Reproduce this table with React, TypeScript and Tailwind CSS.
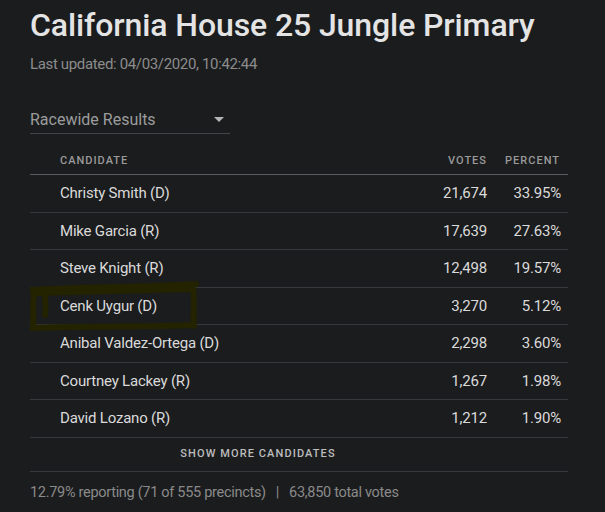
const rows = [
  { name: "Christy Smith (D)", votes: "21,674", pct: "33.95%" },
  { name: "Mike Garcia (R)", votes: "17,639", pct: "27.63%" },
  { name: "Steve Knight (R)", votes: "12,498", pct: "19.57%" },
  { name: "Cenk Uygur (D)", votes: "3,270", pct: "5.12%", marked: true },
  { name: "Anibal Valdez-Ortega (D)", votes: "2,298", pct: "3.60%" },
  { name: "Courtney Lackey (R)", votes: "1,267", pct: "1.98%" },
  { name: "David Lozano (R)", votes: "1,212", pct: "1.90%" },
];

export default function App() {
  return (
    <main
      className="w-[605px] h-[512px] overflow-hidden bg-[#1b1c1e] px-[30px] pt-[6px]"
      style={{ fontFamily: "Roboto, 'Liberation Sans', sans-serif" }}
    >
      <h1 className="text-[32px] leading-[38px] font-medium text-[#e4e4e4] tracking-[-0.1px]">
        California House 25 Jungle Primary
      </h1>
      <p className="mt-[11px] text-[15px] leading-[18px] text-[#8c8c8c] tracking-[-0.35px]">
        Last updated: 04/03/2020, 10:42:44
      </p>

      {/* dropdown */}
      <div className="mt-[31px] w-[200px] h-[30px] flex items-center justify-between border-b border-[#444548] pt-[2px]">
        <span className="text-[16px] text-[#9c9c9c]">Racewide Results</span>
        <span className="mr-[6px] w-0 h-0 border-l-[5px] border-r-[5px] border-t-[5px] border-l-transparent border-r-transparent border-t-[#b4b4b4]" />
      </div>

      {/* table */}
      <div className="mt-[16px] w-[538px]">
        <div className="h-[25px] pt-[5px] flex items-start border-b border-[#5a5b5e] text-[11px] leading-[12px] font-medium tracking-[1px] text-[#9a9a9a]">
          <span className="flex-1 pl-[30px]">CANDIDATE</span>
          <span className="w-[60px] text-right">VOTES</span>
          <span className="w-[81px] text-right pr-[8px]">PERCENT</span>
        </div>
        {rows.map((r) => (
          <div
            key={r.name}
            className="relative h-[37.5px] flex items-center border-b border-[#37383b] text-[15px] tracking-[-0.2px] text-[#dadada]"
          >
            <span className="flex-1 pl-[30px]">{r.name}</span>
            <span className="w-[60px] text-right">{r.votes}</span>
            <span className="w-[81px] text-right pr-[7px]">{r.pct}</span>
            {r.marked && (
              <svg
                className="absolute left-0 top-[-7px] pointer-events-none"
                width="172"
                height="50"
                viewBox="0 0 172 50"
              >
                <path
                  d="M2 9 C40 6 100 7 166 3 M163 5 C165 18 163 32 164 45 M164 44 C110 46 60 45 2 47 M3 46 C4 36 2 26 4 14 M15 12 C15 20 16 28 15 34 M4 12 L162 8"
                  fill="none"
                  stroke="#232300"
                  strokeWidth="6"
                  strokeLinecap="round"
                />
              </svg>
            )}
          </div>
        ))}
        <div className="h-[34px] flex items-center justify-center pr-[82px] border-b border-[#37383b] text-[11px] font-medium tracking-[1.1px] text-[#bdbdbd]">
          SHOW MORE CANDIDATES
        </div>
      </div>

      <p className="mt-[10px] text-[14.5px] text-[#8a8a8a] tracking-[-0.3px]">
        12.79% reporting (71 of 555 precincts)
        <span className="mx-[10px]">|</span>
        63,850 total votes
      </p>
    </main>
  );
}
